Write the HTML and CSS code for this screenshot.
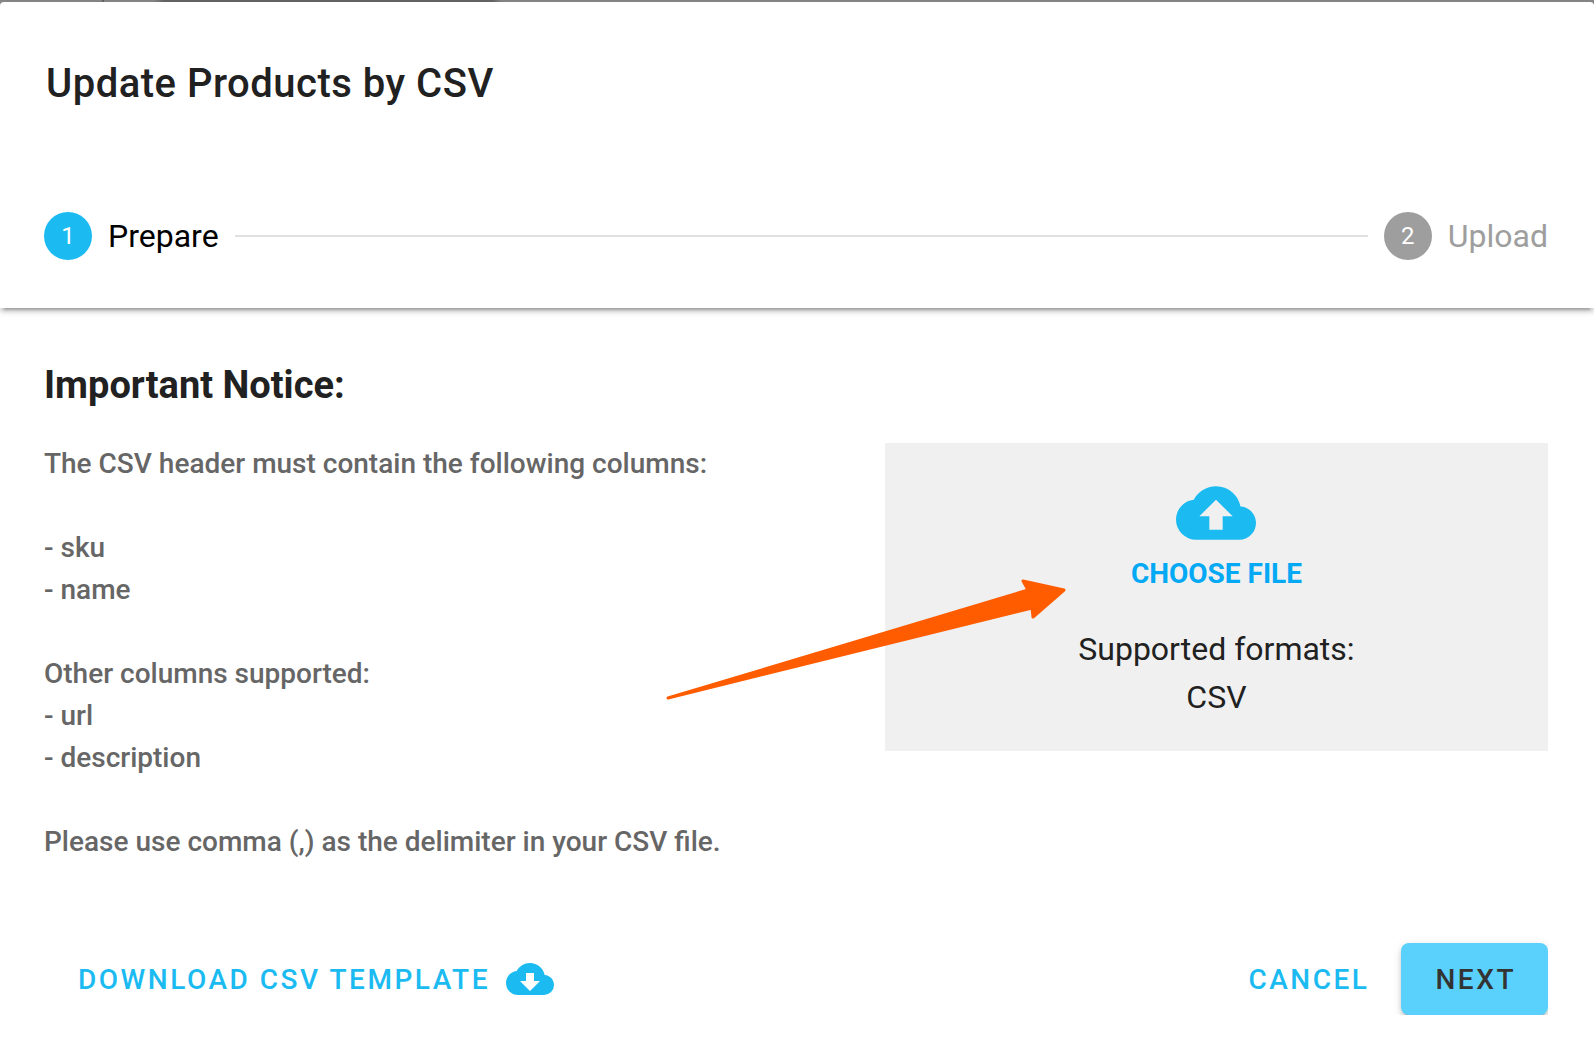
FILE: index.html
```html
<!DOCTYPE html>
<html lang="en">
<head>
    <meta charset="UTF-8">
    <meta name="viewport" content="width=device-width, initial-scale=1.0">
    <title>Update Products by CSV</title>
    <link rel="stylesheet" href="styles.css">
</head>
<body>
    <div class="backdrop"></div>

    <main class="dialog">
        <header class="dialog-header">
            <h1>Update Products by CSV</h1>

            <ol class="stepper">
                <li class="step active">
                    <span class="step-number">1</span>
                    <span>Prepare</span>
                </li>
                <li class="step-line" role="presentation"></li>
                <li class="step">
                    <span class="step-number">2</span>
                    <span>Upload</span>
                </li>
            </ol>
        </header>

        <section class="content">
            <h2>Important Notice:</h2>

            <div class="columns">
                <div class="notice">
                    <p>The CSV header must contain the following columns:</p>
                    <p>- sku<br>- name</p>
                    <p>Other columns supported:<br>- url<br>- description</p>
                    <p>Please use comma (,) as the delimiter in your CSV file.</p>
                </div>

                <div class="upload">
                    <input type="file" id="csvFile" class="file-input" accept=".csv">
                    <label for="csvFile" class="choose-file">
                        <svg class="icon-large" viewBox="0 0 24 24" aria-hidden="true">
                            <path d="M14,13V17H10V13H7L12,8L17,13M19.35,10.03C18.67,6.59 15.64,4 12,4C9.11,4 6.6,5.64 5.35,8.03C2.34,8.36 0,10.9 0,14A6,6 0 0,0 6,20H19A5,5 0 0,0 24,15C24,12.36 21.95,10.19 19.35,10.03Z"/>
                        </svg>
                        <span>CHOOSE FILE</span>
                    </label>
                    <p class="formats">Supported formats:<br>CSV</p>

                    <!-- Arrow pointing at the file picker -->
                    <svg class="arrow" viewBox="0 0 402 122" aria-hidden="true">
                        <path d="M3,120L363,12L358,3L399,12L368,39L367,30Z"/>
                    </svg>
                </div>
            </div>
        </section>

        <footer class="actions">
            <button type="button" class="btn">
                DOWNLOAD CSV TEMPLATE
                <svg class="icon" viewBox="0 0 24 24" aria-hidden="true">
                    <path d="M17,13L12,18L7,13H10V9H14V13M19.35,10.03C18.67,6.59 15.64,4 12,4C9.11,4 6.6,5.64 5.35,8.03C2.34,8.36 0,10.9 0,14A6,6 0 0,0 6,20H19A5,5 0 0,0 24,15C24,12.36 21.95,10.19 19.35,10.03Z"/>
                </svg>
            </button>
            <span class="spacer"></span>
            <button type="button" class="btn">CANCEL</button>
            <button type="button" class="btn btn-primary">NEXT</button>
        </footer>
    </main>
</body>
</html>
```

FILE: styles.css
```css
* {
    box-sizing: border-box;
}
body {
    margin: 0;
    background-color: #888;
    font-family: Roboto, sans-serif;
    color: #212121;
}
h1, h2, p, ol {
    margin: 0;
    padding: 0;
}

/* Page behind the dialog */
.backdrop {
    height: 2px;
    background: linear-gradient(to right, transparent 102px, #666 102px, #666 104px, transparent 104px, transparent 154px, #666 164px, #666 492px, transparent 502px);
}
.dialog {
    min-height: calc(100vh - 2px);
    border-radius: 4px 4px 0 0;
    background-color: #fff;
}

/* Title and stepper */
.dialog-header {
    padding: 50px 46px 48px 44px;
    border-radius: 4px 4px 0 0;
    box-shadow: 0 6px 2px -4px rgba(0, 0, 0, 0.2), 0 4px 4px 0 rgba(0, 0, 0, 0.14), 0 2px 10px 0 rgba(0, 0, 0, 0.12);
}
h1 {
    padding-left: 2px;
    font-size: 40px;
    font-weight: 500;
    line-height: 64px;
    letter-spacing: 0.0125em;
}
.stepper {
    display: flex;
    align-items: center;
    gap: 16px;
    margin-top: 96px;
    list-style: none;
    font-size: 32px;
    line-height: 48px;
}
.step {
    display: flex;
    align-items: center;
    gap: 16px;
    color: #9e9e9e;
}
.step.active {
    color: #000;
}
.step-number {
    width: 48px;
    height: 48px;
    border-radius: 50%;
    background-color: #9e9e9e;
    color: #fff;
    font-size: 24px;
    text-align: center;
}
.step.active .step-number {
    background-color: #1bbbf2;
}
.step-line {
    flex: 1;
    height: 2px;
    background-color: #e0e0e0;
}

/* Notice and upload box */
.content {
    padding: 48px 46px 0 44px;
}
h2 {
    font-size: 38px;
    font-weight: 700;
    line-height: 58px;
}
.columns {
    display: grid;
    grid-template-columns: 5fr 4fr;
    gap: 12px;
    align-items: start;
    margin-top: 29px;
}
.notice {
    display: grid;
    gap: 42px;
    color: #666;
    font-size: 28px;
    font-weight: 500;
    line-height: 42px;
}
.upload {
    position: relative;
    display: flex;
    flex-direction: column;
    align-items: center;
    gap: 30px;
    padding: 30px;
    background-color: #f0f0f0;
    text-align: center;
}
.file-input {
    position: absolute;
    width: 1px;
    height: 1px;
    opacity: 0;
}
.choose-file {
    display: flex;
    flex-direction: column;
    align-items: center;
    color: #03a9f4;
    font-size: 28px;
    font-weight: 700;
    line-height: 42px;
    cursor: pointer;
}
.icon-large {
    width: 80px;
    height: 80px;
    fill: #1bbbf2;
}
.formats {
    font-size: 32px;
    line-height: 48px;
}
.arrow {
    position: absolute;
    top: 135px;
    left: -220px;
    width: 402px;
    height: 122px;
    fill: #ff5c00;
    stroke: #ff5c00;
    stroke-width: 3;
    stroke-linejoin: round;
    pointer-events: none;
}

/* Buttons */
.actions {
    display: flex;
    align-items: center;
    margin: 64px 46px 0 44px;
    padding-top: 16px;
    overflow: hidden;
}
.spacer {
    flex: 1;
}
.btn {
    display: flex;
    align-items: center;
    gap: 16px;
    height: 72px;
    padding: 0 32px 0 34px;
    border: none;
    border-radius: 8px;
    background: none;
    color: #1bbbf2;
    font-family: inherit;
    font-size: 28px;
    font-weight: 500;
    letter-spacing: 0.09em;
    cursor: pointer;
}
.btn-primary {
    background-color: #5ad1fc;
    box-shadow: 0 6px 2px -4px rgba(0, 0, 0, 0.2), 0 4px 4px 0 rgba(0, 0, 0, 0.14), 0 2px 10px 0 rgba(0, 0, 0, 0.12);
    color: #333;
}
.icon {
    width: 48px;
    height: 48px;
    fill: #1bbbf2;
}
```
